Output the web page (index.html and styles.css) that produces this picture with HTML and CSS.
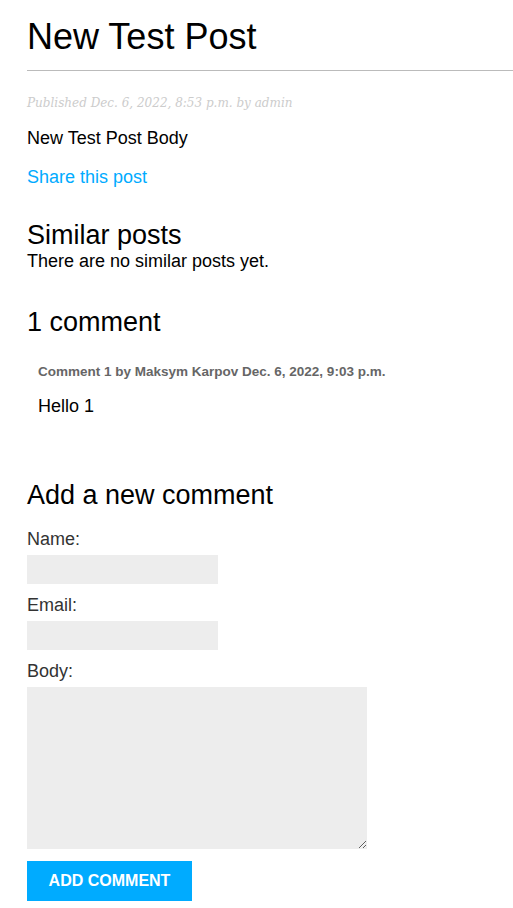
FILE: index.html
```html
<!DOCTYPE html>
<html>
<head>
<meta charset="utf-8">
<title>New Test Post</title>
<link rel="stylesheet" href="styles.css">
</head>
<body>
<div class="content">
  <h1 class="title">New Test Post</h1>
  <p class="date">Published Dec. 6, 2022, 8:53 p.m. by admin</p>
  <p class="body">New Test Post Body</p>
  <p class="share"><a href="#">Share this post</a></p>
  <h2 class="similar-title">Similar posts</h2>
  <span class="similar-none">There are no similar posts yet.</span>
  <h2 class="comments-title">1 comment</h2>
  <div class="comment">
    <p class="info">Comment 1 by Maksym Karpov Dec. 6, 2022, 9:03 p.m.</p>
    <p class="comment-body">Hello 1</p>
  </div>
  <h2 class="form-title">Add a new comment</h2>
  <form class="comment-form">
    <label class="lbl" for="id_name">Name:</label>
    <input class="field" type="text" id="id_name">
    <label class="lbl" for="id_email">Email:</label>
    <input class="field" type="email" id="id_email">
    <label class="lbl" for="id_body">Body:</label>
    <textarea class="area" id="id_body"></textarea>
    <button class="submit" type="button">Add comment</button>
  </form>
</div>
</body>
</html>
```
FILE: styles.css
```css
body {
  margin: 0;
  padding: 0;
  font-family: "Liberation Sans", Arial, sans-serif;
  font-size: 18px;
  line-height: 21px;
  color: #000;
  background: #fff;
}
.content {
  padding: 0 0 0 27px;
}
a {
  color: #00abff;
  text-decoration: none;
}
p {
  margin: 0;
}
.title {
  font-size: 36px;
  font-weight: normal;
  line-height: 41px;
  margin: 16px 0 0;
  padding: 0 0 13px;
  border-bottom: 1px solid #bbb;
}
.date {
  color: #ccc;
  font-family: "DejaVu Serif", Georgia, serif;
  font-size: 12px;
  line-height: 14px;
  font-style: italic;
  margin-top: 25px;
}
.body {
  margin-top: 18px;
}
.share {
  margin-top: 18px;
}
.similar-title, .comments-title, .form-title {
  font-size: 27px;
  font-weight: normal;
  line-height: 31px;
  margin: 32px 0 0;
}
.similar-none {
  display: block;
}
.comments-title {
  margin-top: 35px;
}
.comment {
  padding: 10px 11px;
}
.info {
  font-weight: bold;
  font-size: 13.5px;
  line-height: 15px;
  color: #666;
  margin-top: 16px;
}
.comment-body {
  margin-top: 17px;
}
.form-title {
  margin-top: 53px;
}
.comment-form {
  display: flex;
  flex-direction: column;
  align-items: flex-start;
  margin-top: 17px;
}
.lbl {
  color: #333;
  line-height: 22px;
  margin-bottom: 5px;
}
.field, .area {
  display: block;
  box-sizing: border-box;
  margin: 0 0 10px;
  background: #ededed;
  border: 0;
  padding: 6px 10px;
  font-size: 12px;
  font-family: "Liberation Sans", Arial, sans-serif;
}
.field {
  width: 191px;
  height: 29px;
}
.area {
  width: 340px;
  height: 162px;
  margin-bottom: 12px;
}
.submit {
  box-sizing: border-box;
  width: 165px;
  height: 40px;
  border: 0;
  background: #00abff;
  color: #fff;
  font-family: "Liberation Sans", Arial, sans-serif;
  font-weight: bold;
  font-size: 16px;
  text-transform: uppercase;
  padding: 0 20px;
}
```
